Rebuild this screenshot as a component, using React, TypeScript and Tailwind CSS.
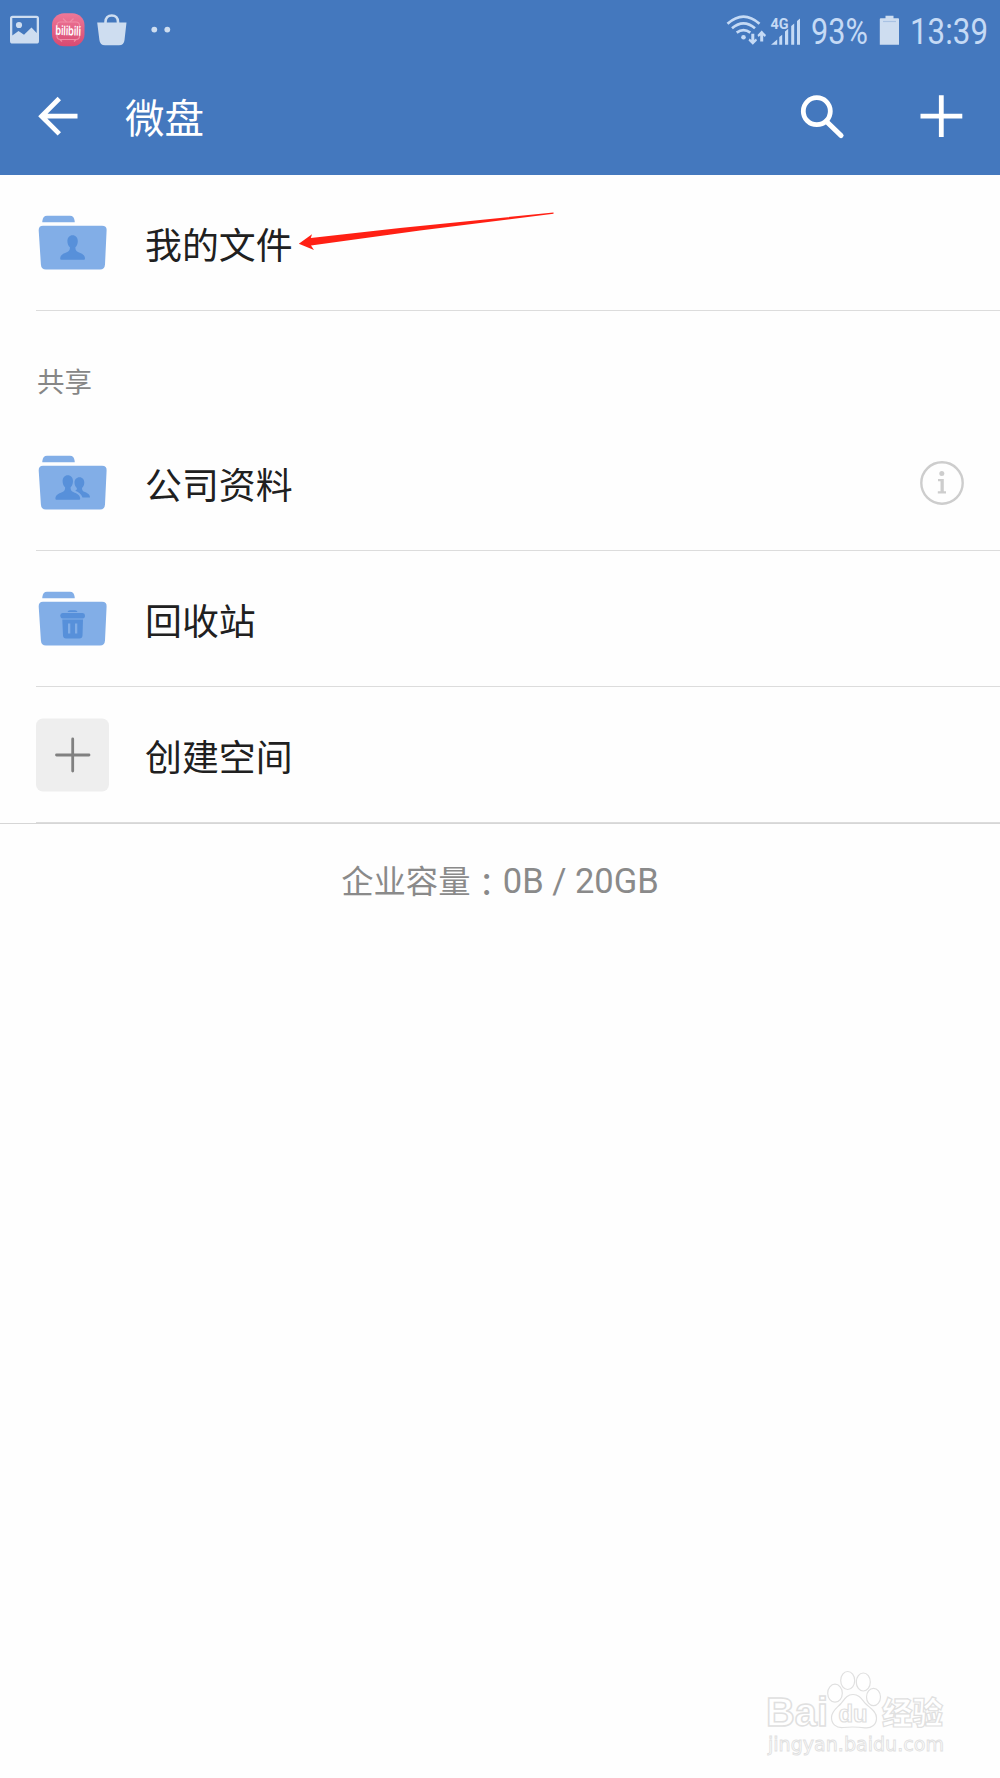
import type { ReactNode } from "react";

function FolderIcon({ children }: { children: ReactNode }) {
  return (
    <svg width="73" height="73" viewBox="0 -2.500 73 73" className="shrink-0">
      <path d="M6.300 13.700V12.500Q7 7.300 11 7.300H34Q38 7.300 38.700 12.500V13.700Z" fill="#82AEE7" />
      <path
        d="M7 17.200H66Q71 17.200 70.600 22L69 56Q68.700 61 64 61H10Q5.200 61 4.900 56L2.700 22Q2.500 17.200 7 17.200Z"
        fill="#82AEE7"
      />
      <g fill="#5790DA">{children}</g>
    </svg>
  );
}

function PersonGlyph() {
  return (
    <path d="M36.600 26.700C39.800 26.700 41.800 29.300 41.800 32.500C41.800 35.500 40.800 37.400 39.400 38.800C39.300 41.300 40 42.600 42 43.400C46.500 45.200 49 46.500 49 50.200Q49 51.200 48 51.200H25.200Q24.200 51.200 24.200 50.200C24.200 46.500 26.800 45.200 31.300 43.400C33.300 42.600 34 41.300 33.900 38.800C32.400 37.400 31.400 35.500 31.400 32.500C31.400 29.300 33.400 26.700 36.600 26.700Z" />
  );
}

function PeopleGlyph() {
  return (
    <>
      <path d="M31.800 26.700C35 26.700 37 29.300 37 32.500C37 35.500 36 37.400 34.600 38.800C34.500 41.300 35.200 42.600 37.200 43.400C41.500 45.200 44.200 46.500 44.200 50.200Q44.200 51.200 43.200 51.200H20.400Q19.400 51.200 19.400 50.200C19.400 46.500 22 45.200 26.500 43.400C28.500 42.600 29.200 41.300 29.100 38.800C27.600 37.400 26.600 35.500 26.600 32.500C26.600 29.300 28.600 26.700 31.800 26.700Z" />
      <path d="M43.500 28.700C46.500 28.700 48.300 31 48.300 34C48.300 36.500 47.300 38.300 46 39.500C46 41.500 46.500 42.500 48.300 43.300C51.800 44.800 54 46 54 49H46.500C45.200 45.300 42.500 43.600 39.200 42.300C40.500 41.800 41 41 40.800 39.500C39.500 38.300 38.500 36.500 38.500 34C38.500 31 40.500 28.700 43.500 28.700Z" />
    </>
  );
}

function TrashGlyph() {
  return (
    <>
      <path d="M31.500 27.500Q32 25.700 34 25.700H39Q41 25.700 41.500 27.500Z" />
      <path d="M26.500 28.500H46.700Q49 28.500 49 31Q49 34 46.500 34H26.800Q24.300 34 24.300 31Q24.300 28.500 26.500 28.500Z" />
      <path
        fillRule="evenodd"
        d="M26.300 35H47L46.500 51Q46.300 54 43.500 54H30Q27.200 54 27 51ZM32 39V49H34.300V39ZM39 39V49H41.300V39Z"
      />
    </>
  );
}

function Row({ icon, label, trailing }: { icon: ReactNode; label: string; trailing?: ReactNode }) {
  return (
    <li className="ml-9 flex h-[136px] items-center border-b border-[#dcdcdc] pr-9 text-[36.900px] text-[#202020]">
      {icon}
      <span className="ml-[36px] pt-[2px] leading-none">{label}</span>
      {trailing}
    </li>
  );
}

function StatusBar() {
  return (
    <div className="flex h-[60px] items-center justify-between text-[#CEDDF0]">
      <svg width="180" height="60" viewBox="0 0 180 60">
        <path
          fill="#CEDDF0"
          fillRule="evenodd"
          d="M12.500 15.800H36.500Q39 15.800 39 18.300V41Q39 43.600 36.500 43.600H12.500Q10 43.600 10 41V18.300Q10 15.800 12.500 15.800ZM12.300 18V35.500L18.500 31L24 34.800L31.500 27.500L36.700 33V18Z"
        />
        <circle cx="19" cy="25" r="3.100" fill="#CEDDF0" />
        <defs>
          <linearGradient id="pink" x1="0" y1="0" x2="0" y2="1">
            <stop stopColor="#EE7898" />
            <stop offset="1" stopColor="#D84A72" />
          </linearGradient>
        </defs>
        <rect x="52" y="13.300" width="32.500" height="33" rx="12" fill="url(#pink)" />
        <g fill="none" stroke="#F08BA5" strokeWidth="1.200">
          <rect x="57" y="22" width="22.500" height="17.500" rx="3.500" />
          <path d="M63 18.500L66.500 22M73.500 18.500L70 22M60 39.500L62 41.500M76 39.500L74 41.500" />
        </g>
        <text
          x="55.500" y="35.300" textLength="25.500" lengthAdjust="spacingAndGlyphs"
          fill="#fff" transform="rotate(2 68 31)"
          className="font-[Inter,sans-serif] text-[13px] font-semibold"
        >
          bilibili
        </text>
        <path d="M97.200 22.500H126.500L124.500 40Q124 45.300 119 45.300H105Q100 45.300 99.400 40Z" fill="#CEDDF0" />
        <path d="M105.500 26V22C105.500 18 108 15.500 111.800 15.500S118 18 118 22V26" fill="none" stroke="#CEDDF0" strokeWidth="2.600" />
        <circle cx="154.300" cy="29.600" r="2.900" fill="#CEDDF0" />
        <circle cx="167.300" cy="29.600" r="2.900" fill="#CEDDF0" />
      </svg>
      <div className="flex h-[60px] items-center font-[Roboto,sans-serif] text-[36px] leading-none">
        <svg width="86" height="60" viewBox="720 0 86 60" fill="#C5DAF5">
          <g fill="none" stroke="#C5DAF5" strokeWidth="2.700">
            <path d="M727.500 23.800Q743.500 9.500 759.500 23.800" />
            <path d="M732 28.300Q743.500 18.500 755 28.300" />
            <path d="M736.700 32.600Q743.500 27.500 750.300 32.600" />
          </g>
          <circle cx="743.500" cy="37.300" r="2.300" />
          <path d="M751.300 33.800H754.300V40L756 38.500L757 40.500L752.800 44.800L748.500 40.500L749.600 38.500L751.300 40Z" />
          <path d="M760.200 41.500H763.200V35.500L764.900 37L766 35L761.700 30.600L757.500 35L758.500 37L760.200 35.500Z" />
          <text x="770.500" y="29" textLength="18" lengthAdjust="spacingAndGlyphs" className="font-[Roboto,sans-serif] text-[14.500px] font-bold">
            4G
          </text>
          <path d="M771 44.700L777.200 39.500V44.700ZM779.300 37L782.200 34.800V44.700H779.300ZM785 31.500L788.200 28.800V44.700H785ZM791.200 26L794.200 23.500V44.700H791.200ZM797 21L800 18.400V44.700H797Z" />
        </svg>
        <span className="ml-[5px] inline-block w-[62px] origin-left scale-x-[.85] pt-[4px] whitespace-nowrap text-[#C5DAF5]">93%</span>
        <svg width="34" height="60" viewBox="873 0 34 60">
          <path d="M880.700 18.300H885.500V15.800H893.500V18.300H898.200Q899 18.300 899 19V44.700H879.800V19Q879.800 18.300 880.700 18.300Z" fill="#CEDDF0" />
          <path d="M883 21.500H896" stroke="#A9C2E3" strokeWidth="1.200" />
        </svg>
        <span className="ml-[3px] inline-block w-[90px] origin-left scale-x-[.87] pt-[4px] whitespace-nowrap text-[#C5DAF5]">13:39</span>
      </div>
    </div>
  );
}

function Watermark() {
  return (
    <svg width="260" height="128" viewBox="0 0 260 128" fill="#fff" stroke="#e0e0e0" strokeWidth="1.200">
      <text x="26" y="76" textLength="62" lengthAdjust="spacingAndGlyphs" className="font-['Liberation_Sans',sans-serif] text-[40px] font-bold" strokeWidth="1.500">
        Bai
      </text>
      <ellipse cx="95" cy="43.200" rx="7.300" ry="9" />
      <ellipse cx="107.700" cy="30.500" rx="7" ry="9" />
      <ellipse cx="123.300" cy="32" rx="7" ry="9" />
      <ellipse cx="133.500" cy="47" rx="7" ry="8.700" />
      <path d="M113 44.500C120 44.500 122 50 126 54C130 58 136.500 61 136.500 68C136.500 75 131 78.500 125 77.800C117 76.800 110 76.800 103 77.500C96 78 91.500 74 91.500 67.500C91.500 61 97 58 101 53.500C104.500 49 107 44.500 113 44.500Z" />
      <text x="98.500" y="72" textLength="29" lengthAdjust="spacingAndGlyphs" className="font-['Liberation_Sans',sans-serif] text-[24px] font-bold">
        du
      </text>
      <text x="142" y="74" textLength="61" lengthAdjust="spacingAndGlyphs" className="font-['Noto_Sans_CJK_SC',sans-serif] text-[31px] font-black">
        经验
      </text>
      <text x="28" y="100.500" textLength="176" lengthAdjust="spacingAndGlyphs" className="font-['DejaVu_Sans',sans-serif] text-[20px]" strokeWidth="0.900">
        jingyan.baidu.com
      </text>
    </svg>
  );
}

export default function App() {
  return (
    <div className="relative flex h-[1778px] w-[1000px] flex-col overflow-hidden bg-[#fefefe] font-['Noto_Sans_CJK_SC',sans-serif]">
      <header className="h-[175px] shrink-0 bg-[#4478BE] text-white">
        <StatusBar />
        <div className="flex h-[115px] items-center">
          <svg width="125" height="115" viewBox="0 60 125 115" fill="none" stroke="#fff" strokeWidth="4.800">
            <path d="M77.500 116.200H42M59.300 98.500L41.600 116.200L59.300 133.900" />
          </svg>
          <h1 className="pb-[4px] text-[39.500px] leading-none">微盘</h1>
          <svg width="220" height="115" viewBox="780 60 220 115" fill="none" stroke="#fff" strokeWidth="4.800" className="ml-auto">
            <circle cx="816.800" cy="111.200" r="13.500" />
            <path d="M827 122L841 135.500" strokeWidth="5.200" strokeLinecap="round" />
            <path d="M920.500 116.200H962.300M941.300 95.300V137" />
          </svg>
        </div>
      </header>
      <ul>
        <Row icon={<FolderIcon><PersonGlyph /></FolderIcon>} label="我的文件" />
      </ul>
      <h2 className="flex h-[104px] items-center pt-[35px] pl-[37px] text-[27.500px] leading-none text-[#868686]">共享</h2>
      <ul>
        <Row
          icon={<FolderIcon><PeopleGlyph /></FolderIcon>}
          label="公司资料"
          trailing={
            <svg width="44" height="44" viewBox="0 0 44 44" className="ml-auto" fill="#cdcdcd">
              <circle cx="22" cy="22" r="20.700" fill="none" stroke="#cdcdcd" strokeWidth="2.400" />
              <circle cx="21.800" cy="12.500" r="2.500" />
              <path d="M18 18H23.800V30.200H26V32.500H17.800V30.200H20.500V20.300H18Z" />
            </svg>
          }
        />
        <Row icon={<FolderIcon><TrashGlyph /></FolderIcon>} label="回收站" />
        <Row
          icon={
            <svg width="73" height="75" viewBox="0 -1.500 73 75" className="shrink-0">
              <rect width="73" height="73" rx="7" fill="#eeeeee" />
              <path d="M20.500 36.500H53M36.700 20.500V52.500" stroke="#808080" strokeWidth="2.800" strokeLinecap="round" />
            </svg>
          }
          label="创建空间"
        />
      </ul>
      <footer className="flex h-[115px] items-center justify-center border-t border-[#d6d6d6] text-[32.300px] leading-none text-[#8a8a8a]">
        <span className="pb-[4px]">企业容量</span>
        <span className="pt-[2px] font-['Noto_Sans_CJK_TC',sans-serif]">：</span>
        <span className="font-[Roboto,sans-serif] text-[34.500px]">0B / 20GB</span>
      </footer>
      <div className="mt-auto flex justify-end">
        <Watermark />
      </div>
      <svg width="258" height="42" viewBox="297 208 258 42" className="absolute top-[208px] left-[297px]">
        <path d="M298.800 243.700L312 234.300L310.800 238L400 228L553.500 212.500V213.700L420 230.500L311 245.500L314 250Z" fill="#FF2014" />
      </svg>
    </div>
  );
}
